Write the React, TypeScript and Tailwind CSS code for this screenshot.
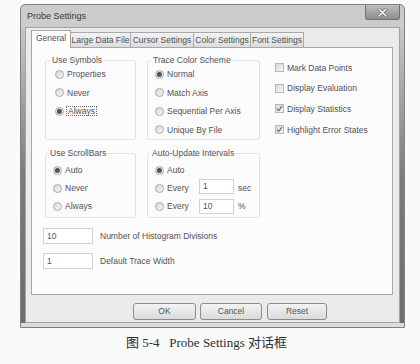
import React from 'react';

type RadioProps = {
  label: string;
  checked?: boolean;
  focus?: boolean;
  rowClass?: string;
};

function Radio({ label, checked, focus, rowClass = 'h-[18.5px]' }: RadioProps) {
  return (
    <div className={`flex items-center ${rowClass}`}>
      <span className="flex h-[9px] w-[9px] shrink-0 items-center justify-center rounded-full border border-[#aaaaaa] bg-gradient-to-br from-[#d6d6d6] to-[#f8f8f8]">
        {checked && <span className="h-[5px] w-[5px] rounded-full bg-gradient-to-br from-[#3c3c3c] to-[#6a6a6a]" />}
      </span>
      <span
        className={
          focus
            ? 'ml-[2px] border border-dotted border-[#6a6a6a] px-[1px] leading-[8px]'
            : 'ml-[3px] leading-[10px]'
        }
      >
        {label}
      </span>
    </div>
  );
}

function Check({ label, checked }: { label: string; checked?: boolean }) {
  return (
    <div className="flex h-[20.6px] items-center">
      <span className="flex h-[9px] w-[9px] shrink-0 items-center justify-center border border-[#b8b8b8] bg-gradient-to-br from-[#d8d8d8] to-[#f6f6f6]">
        {checked && (
          <svg width="7" height="7" viewBox="0 0 7 7">
            <path d="M1 3.8 L2.8 5.6 L6 1.2" fill="none" stroke="#6a737c" strokeWidth="1.3" />
          </svg>
        )}
      </span>
      <span className="ml-[3px] leading-[10px]">{label}</span>
    </div>
  );
}

function Field({ value, width }: { value: string; width: string }) {
  return (
    <div className={`flex h-[15px] items-center border border-[#d2d2d2] bg-white pl-[3px] ${width}`}>
      {value}
    </div>
  );
}

const tabs = [
  { label: 'Large Data File', w: 'w-[61px]' },
  { label: 'Cursor Settings', w: 'w-[64px]' },
  { label: 'Color Settings', w: 'w-[58px]' },
  { label: 'Font Settings', w: 'w-[54px]' },
];

export default function App() {
  return (
    <div className="h-[364px] w-[420px] overflow-hidden bg-[#fafafa] pl-[20px] pt-[4px] font-['Liberation_Sans',Arial,sans-serif] text-[8.5px] text-[#525252]">
      <div className="flex h-[324px] w-[385px] flex-col rounded-t-[5px] border border-[#808080] bg-gradient-to-b from-[#cbcbcb] via-[#d9d9d9] to-[#dcdcdc]">
        {/* title bar */}
        <div className="flex h-[22px] items-start justify-between">
          <span className="pl-[6px] pt-[5px] text-[9px] leading-[12px] text-[#3a3a3a]">Probe Settings</span>
          <div className="mr-[4px] flex h-[15px] w-[35px] items-center justify-center rounded-b-[3px] border border-t-0 border-[#707070] bg-gradient-to-b from-[#bdbdbd] to-[#8e8e8e]">
            <svg width="11" height="9" viewBox="0 0 11 9">
              <path d="M2 1 L9 8 M9 1 L2 8" stroke="#6a6a6a" strokeWidth="3" strokeLinecap="round" />
              <path d="M2 1 L9 8 M9 1 L2 8" stroke="#f4f4f4" strokeWidth="1.6" strokeLinecap="round" />
            </svg>
          </div>
        </div>

        <div className="flex flex-1">
          <div className="w-[4px] bg-gradient-to-b from-[#c9c9c9] via-[#7c7c7c] to-[#6e6e6e]" />
          <div className="flex flex-1 flex-col border border-[#a2a2a2] bg-[#ebebeb]">
            {/* tabs */}
            <div className="ml-[5px] flex h-[19px] items-end">
              <div className="relative z-10 -mb-px flex h-[18px] w-[40px] items-start justify-center border border-b-0 border-[#a5a5a5] bg-[#fcfcfc] pt-[2px] leading-[10px]">
                General
              </div>
              {tabs.map((t) => (
                <div
                  key={t.label}
                  className={`-ml-px flex h-[15px] items-center justify-center whitespace-nowrap border border-b-0 border-[#a9a9a9] bg-gradient-to-b from-[#f3f3f3] to-[#dcdcdc] leading-[10px] ${t.w}`}
                >
                  {t.label}
                </div>
              ))}
            </div>

            {/* panel */}
            <div className="ml-[5px] h-[248px] w-[362px] border border-[#a7a7a7] bg-[#fcfcfc] pt-[7px]">
              <div className="flex pl-[13px]">
                <fieldset className="h-[85px] w-[91px] rounded-[2px] border border-[#e3e3e3]">
                  <legend className="ml-[4px] px-[2px] leading-[10px]">Use Symbols</legend>
                  <div className="pl-[9px]">
                    <Radio label="Properties" />
                    <Radio label="Never" />
                    <Radio label="Always" checked focus />
                  </div>
                </fieldset>
                <fieldset className="ml-[11px] h-[85px] w-[113px] rounded-[2px] border border-[#e3e3e3]">
                  <legend className="ml-[3px] px-[2px] leading-[10px]">Trace Color Scheme</legend>
                  <div className="pl-[7px]">
                    <Radio label="Normal" checked />
                    <Radio label="Match Axis" />
                    <Radio label="Sequential Per Axis" />
                    <Radio label="Unique By File" />
                  </div>
                </fieldset>
                <div className="ml-[15px] pt-[2.5px]">
                  <Check label="Mark Data Points" />
                  <Check label="Display Evaluation" />
                  <Check label="Display Statistics" checked />
                  <Check label="Highlight Error States" checked />
                </div>
              </div>

              <div className="mt-[8px] flex pl-[13px]">
                <fieldset className="h-[70px] w-[91px] rounded-[2px] border border-[#e3e3e3]">
                  <legend className="ml-[2px] px-[2px] leading-[10px]">Use ScrollBars</legend>
                  <div className="pl-[7px] pt-[3px]">
                    <Radio label="Auto" checked rowClass="h-[18px]" />
                    <Radio label="Never" rowClass="h-[18px]" />
                    <Radio label="Always" rowClass="h-[18px]" />
                  </div>
                </fieldset>
                <fieldset className="ml-[11px] h-[70px] w-[113px] rounded-[2px] border border-[#e3e3e3]">
                  <legend className="ml-[2px] px-[2px] leading-[10px]">Auto-Update Intervals</legend>
                  <div className="pl-[7px] pt-[3px]">
                    <Radio label="Auto" checked rowClass="h-[18px]" />
                    <div className="flex h-[18px] items-center">
                      <div className="w-[44px]">
                        <Radio label="Every" rowClass="h-[18px]" />
                      </div>
                      <div className="-mt-[3px]">
                        <Field value="1" width="w-[35px]" />
                      </div>
                      <span className="ml-[4px] leading-[10px]">sec</span>
                    </div>
                    <div className="flex h-[18px] items-center">
                      <div className="w-[44px]">
                        <Radio label="Every" rowClass="h-[18px]" />
                      </div>
                      <Field value="10" width="w-[35px]" />
                      <span className="ml-[4px] leading-[10px]">%</span>
                    </div>
                  </div>
                </fieldset>
              </div>

              <div className="ml-[11px] mt-[10px] flex items-center">
                <Field value="10" width="w-[50px] h-[16px]" />
                <span className="ml-[7px]">Number of Histogram Divisions</span>
              </div>
              <div className="ml-[11px] mt-[9px] flex items-center">
                <Field value="1" width="w-[50px] h-[16px]" />
                <span className="ml-[7px]">Default Trace Width</span>
              </div>
            </div>

            {/* buttons */}
            <div className="ml-[107px] mt-[8px] flex">
              <button className="h-[17px] w-[63px] rounded-[3px] border border-[#8c8c8c] bg-gradient-to-b from-[#f4f4f4] to-[#dadada] text-[8.5px] text-[#555]">
                OK
              </button>
              <button className="ml-[4px] h-[17px] w-[62px] rounded-[3px] border border-[#8c8c8c] bg-gradient-to-b from-[#f4f4f4] to-[#dadada] text-[8.5px] text-[#555]">
                Cancel
              </button>
              <button className="ml-[5px] h-[17px] w-[60px] rounded-[3px] border border-[#8c8c8c] bg-gradient-to-b from-[#f4f4f4] to-[#dadada] text-[8.5px] text-[#555]">
                Reset
              </button>
            </div>
          </div>
          <div className="w-[4px] bg-gradient-to-b from-[#c9c9c9] via-[#7c7c7c] to-[#6e6e6e]" />
        </div>
        <div className="h-[4px]" />
      </div>

      <div className="mt-[7px] flex w-[385px] justify-center pr-[12px] font-['Liberation_Serif','Noto_Sans_CJK_SC',serif] text-[13px] leading-[16px] text-[#2e2e2e]">
        <span className="whitespace-pre">图 5-4   Probe Settings 对话框</span>
      </div>
    </div>
  );
}
